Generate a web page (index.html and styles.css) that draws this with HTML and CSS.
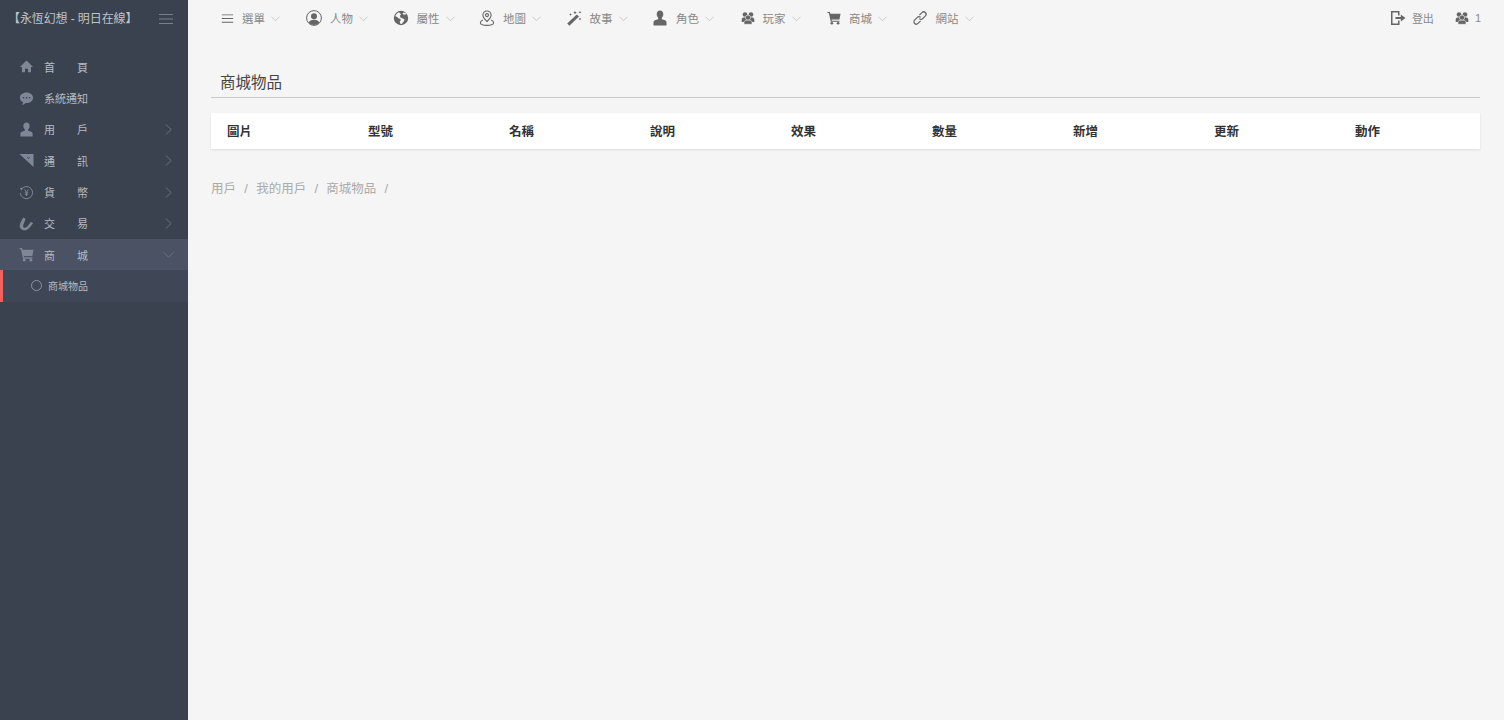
FILE: index.html
```html
<!DOCTYPE html>
<html lang="zh-Hant">

<head>
    <meta charset="UTF-8">
    <title>商城物品</title>
    <link rel="stylesheet" href="styles.css">
</head>

<body>
    <svg class="defs" width="0" height="0">
        <symbol id="i-home" viewBox="0 0 16 16"><path d="M8 1.500 15 8.600h-2.200V14H9.600v-3.600H6.400V14H3.200V8.600H1z"/></symbol>
        <symbol id="i-chat" viewBox="0 0 16 16"><path fill-rule="evenodd" d="M8 1.500c3.900 0 7 2.500 7 5.700s-3.100 5.700-7 5.700l-1-.1C5.900 14 4.600 14.700 3.300 14.800c.6-.8 1-1.600 1-2.700C2.300 11.100 1 9.300 1 7.200 1 4 4.100 1.500 8 1.500zM4.800 6.300a.9.900 0 1 0 0 1.800.9.900 0 0 0 0-1.800zm3.200 0a.9.900 0 1 0 0 1.800.9.900 0 0 0 0-1.800zm3.200 0a.9.900 0 1 0 0 1.800.9.900 0 0 0 0-1.800z"/></symbol>
        <symbol id="i-user" viewBox="0 0 16 16"><path d="M8 .5c2 0 3.300 1.500 3.300 3.700 0 1.500-.6 2.800-1.500 3.500v1.600c2.500.5 4.700 1.300 4.700 2.900V15.500H1.500v-3.300c0-1.600 2.200-2.400 4.700-2.900V7.700c-.9-.7-1.500-2-1.500-3.500C4.700 2 6 .5 8 .5z"/></symbol>
        <symbol id="i-corner" viewBox="0 0 16 16"><path fill-rule="evenodd" d="M.5 1h15v14zM8.400 4.500l1.800 1.700 1.800-1.700-.5-.5-1.300 1.200L8.900 4z"/></symbol>
        <symbol id="i-yen" viewBox="0 0 16 16"><g fill="none" stroke="currentColor" stroke-width="1"><path d="M2.200 5.200A6.500 6.500 0 1 1 1.500 8.500"/><path d="M6 4.800 8 7.800 10 4.800M8 7.800v3.800M6.200 8.300h3.600M6.200 9.900h3.600"/></g><path d="M.8 3.200 3.600 3 3 6z"/></symbol>
        <symbol id="i-magnet" viewBox="0 0 16 16"><path d="M4.500 1.500 1.300 7.800c-1.300 3.400-.2 6 2.400 7 2.900 1 5.600 0 8-2.900l3.300-4.300-2.200-1.600-3.300 4.500c-1.500 1.800-3 2.400-4 2-1.100-.4-1.400-1.500-.9-2.800L7 2.800z"/></symbol>
        <symbol id="i-cart" viewBox="0 0 16 16"><path d="M.5 1h2.800l.5 2H15.500l-1.300 6.700H5.200l.3 1.300h8.800v1.400H4.300L2.100 2.400H.5z"/><circle cx="5.500" cy="14" r="1.500"/><circle cx="12.700" cy="14" r="1.500"/></symbol>
        <symbol id="i-menu" viewBox="0 0 16 16"><path d="M1 3h14v1.100H1zM1 7.500h14v1.100H1zM1 12h14v1.100H1z"/></symbol>
        <symbol id="i-person" viewBox="0 0 16 16"><circle cx="8" cy="8" r="7.400" fill="none" stroke="currentColor" stroke-width="1"/><circle cx="8" cy="6.200" r="3"/><path d="M2.800 12.800c.6-2.200 2.700-3 5.200-3s4.600.8 5.200 3A7 7 0 0 1 8 15a7 7 0 0 1-5.200-2.200z"/></symbol>
        <symbol id="i-globe" viewBox="0 0 16 16"><path fill-rule="evenodd" d="M8 .8a7.200 7.200 0 1 1 0 14.400A7.200 7.200 0 0 1 8 .8zM6 2.200C4 3 2.700 4.600 2.300 6.300l1.900.6 1.400 1.500 1.700.3.500 1.600-1.100 1.400.6 2.100 1.300.1 2.500-2.800.3-1.900-2.200-1-1.700-.8-.7-1.600 1.300-1.200zm4.600.4L9.400 3.700l1.600 1 2.700-.4A6 6 0 0 0 10.600 2.600z"/></symbol>
        <symbol id="i-pin" viewBox="0 0 16 16"><g fill="none" stroke="currentColor" stroke-width="1.100"><path d="M8 11.500C5.600 9.300 3.900 7.500 3.900 5.100a4.100 4.100 0 0 1 8.200 0c0 2.400-1.700 4.200-4.100 6.400z"/><circle cx="8" cy="5.100" r="1.500"/><path d="M3.800 10C2.200 10.800 1.400 11.600 1.400 12.800c0 1.500 3 2.600 6.600 2.600s6.600-1.100 6.600-2.600c0-1.200-.8-2-2.400-2.800"/></g></symbol>
        <symbol id="i-wand" viewBox="0 0 16 16"><path d="M10.800 4.400 13 6.600 3.400 15.800 1.200 13.600z"/><path d="M9 .8l.5 1.300 1.300.7-1.300.5L9 4.600l-.5-1.300-1.300-.5 1.300-.7zM4.500 3l.4 1.100 1.100.4-1.100.4-.4 1.100-.4-1.100L3 4.500l1.100-.4zM14 .8l.4 1 1.100.5-1.100.4-.4 1.100-.4-1.100-1.100-.4 1.100-.5zM14 7.500l.4 1 1.100.5-1.100.4-.4 1.100-.4-1.100-1.100-.4 1.100-.5z"/></symbol>
        <symbol id="i-users" viewBox="0 0 16 16"><circle cx="4.600" cy="4" r="2.700"/><circle cx="11.400" cy="4" r="2.700"/><path d="M.8 12.500V9.500C.8 8 2.600 7.200 4.600 7.200s3.800.8 3.800 2.300v3zM7.600 12.500v-3c0-1.500 1.800-2.300 3.800-2.300s3.800.8 3.800 2.300v3z"/><g stroke="#f5f5f5" stroke-width=".7"><circle cx="8" cy="7.600" r="3"/><path d="M3.400 15.200v-2.500c0-1.500 2.200-2.200 4.600-2.200s4.600.7 4.600 2.200v2.500z"/></g></symbol>
        <symbol id="i-link" viewBox="0 0 16 16"><g fill="none" stroke="currentColor" stroke-width="1.200"><path d="M7.400 5.200 10 2.600a2.300 2.300 0 0 1 3.400 3.300l-2.700 2.700a2.300 2.300 0 0 1-3.300 0"/><path d="M8.600 10.800 6 13.400a2.300 2.300 0 0 1-3.400-3.300l2.700-2.700a2.300 2.300 0 0 1 3.300 0"/></g></symbol>
        <symbol id="i-logout" viewBox="0 0 16 16"><path d="M1 1h8.500v4.500H8V2.500H2.500v11H8v-3h1.500v4.500H1z"/><path d="M5.500 7h5.300V4.500L15.500 8l-4.700 3.500V9H5.500z"/></symbol>
        <symbol id="i-right" viewBox="0 0 10 10"><path d="M2.500.5 7.500 5l-5 4.500" fill="none" stroke="currentColor" stroke-width=".8"/></symbol>
        <symbol id="i-down" viewBox="0 0 10 10"><path d="M.5 3 5 7.500 9.500 3" fill="none" stroke="currentColor" stroke-width=".8"/></symbol>
    </svg>

    <aside class="sidebar">
        <div class="brand">
            <span class="brand-name">【永恆幻想 - 明日在線】</span>
            <svg class="brand-toggle"><use href="#i-menu"/></svg>
        </div>
        <ul class="side-menu">
            <li class="side-item"><svg class="side-icon"><use href="#i-home"/></svg><span>首　　頁</span></li>
            <li class="side-item"><svg class="side-icon"><use href="#i-chat"/></svg><span>系統通知</span></li>
            <li class="side-item"><svg class="side-icon"><use href="#i-user"/></svg><span>用　　戶</span><svg class="side-arrow"><use href="#i-right"/></svg></li>
            <li class="side-item"><svg class="side-icon"><use href="#i-corner"/></svg><span>通　　訊</span><svg class="side-arrow"><use href="#i-right"/></svg></li>
            <li class="side-item"><svg class="side-icon"><use href="#i-yen"/></svg><span>貨　　幣</span><svg class="side-arrow"><use href="#i-right"/></svg></li>
            <li class="side-item"><svg class="side-icon"><use href="#i-magnet"/></svg><span>交　　易</span><svg class="side-arrow"><use href="#i-right"/></svg></li>
            <li class="side-item active"><svg class="side-icon"><use href="#i-cart"/></svg><span>商　　城</span><svg class="side-arrow"><use href="#i-down"/></svg></li>
            <li class="side-sub"><span class="sub-dot"></span><span>商城物品</span></li>
        </ul>
    </aside>

    <div class="main">
        <header class="topbar">
            <nav class="topnav">
                <a class="nav-item"><svg class="nav-icon small"><use href="#i-menu"/></svg><span>選單</span><svg class="nav-arrow"><use href="#i-down"/></svg></a>
                <a class="nav-item"><svg class="nav-icon"><use href="#i-person"/></svg><span>人物</span><svg class="nav-arrow"><use href="#i-down"/></svg></a>
                <a class="nav-item"><svg class="nav-icon"><use href="#i-globe"/></svg><span>屬性</span><svg class="nav-arrow"><use href="#i-down"/></svg></a>
                <a class="nav-item"><svg class="nav-icon"><use href="#i-pin"/></svg><span>地圖</span><svg class="nav-arrow"><use href="#i-down"/></svg></a>
                <a class="nav-item"><svg class="nav-icon"><use href="#i-wand"/></svg><span>故事</span><svg class="nav-arrow"><use href="#i-down"/></svg></a>
                <a class="nav-item"><svg class="nav-icon"><use href="#i-user"/></svg><span>角色</span><svg class="nav-arrow"><use href="#i-down"/></svg></a>
                <a class="nav-item"><svg class="nav-icon narrow"><use href="#i-users"/></svg><span>玩家</span><svg class="nav-arrow"><use href="#i-down"/></svg></a>
                <a class="nav-item"><svg class="nav-icon narrow"><use href="#i-cart"/></svg><span>商城</span><svg class="nav-arrow"><use href="#i-down"/></svg></a>
                <a class="nav-item"><svg class="nav-icon"><use href="#i-link"/></svg><span>網站</span><svg class="nav-arrow"><use href="#i-down"/></svg></a>
            </nav>
            <div class="topright">
                <a class="top-link"><svg class="nav-icon"><use href="#i-logout"/></svg><span>登出</span></a>
                <a class="top-link"><svg class="nav-icon narrow"><use href="#i-users"/></svg><span>1</span></a>
            </div>
        </header>

        <section class="content">
            <h2 class="page-title">商城物品</h2>
            <div class="table-head">
                <div>圖片</div>
                <div>型號</div>
                <div>名稱</div>
                <div>說明</div>
                <div>效果</div>
                <div>數量</div>
                <div>新增</div>
                <div>更新</div>
                <div>動作</div>
            </div>
            <div class="crumbs">
                <span>用戶</span><i>/</i><span>我的用戶</span><i>/</i><span>商城物品</span><i>/</i>
            </div>
        </section>
    </div>
</body>

</html>
```

FILE: styles.css
```css
* {
    box-sizing: border-box;
}

html, body {
    height: 100%;
}

body {
    margin: 0;
    display: flex;
    height: 720px;
    overflow: hidden;
    background-color: #f5f5f5;
    font-family: "Liberation Sans", "Noto Sans CJK TC", sans-serif;
    color: #777;
}

.defs {
    position: absolute;
}

svg {
    fill: currentColor;
    flex: none;
}

.sidebar {
    width: 188px;
    flex: none;
    background-color: #3a4250;
}

.brand {
    height: 51px;
    padding: 10px 14px 0 8px;
    display: flex;
    justify-content: space-between;
    align-items: flex-start;
}

.brand-name {
    font-size: 12px;
    letter-spacing: -0.1px;
    line-height: 18px;
    color: #bfc3ca;
    white-space: nowrap;
}

.brand-toggle {
    width: 16px;
    height: 16px;
    margin-top: 1px;
    color: #79808c;
}

.side-menu {
    list-style: none;
    margin: 0;
    padding: 0;
}

.side-item {
    height: 31.350px;
    padding: 0 14px 0 19px;
    display: flex;
    align-items: center;
    font-size: 11px;
    color: #b6bbc3;
}

.side-item span {
    flex: 1;
}

.side-item.active {
    background-color: #4a5264;
}

.side-icon {
    width: 15px;
    height: 15px;
    margin-right: 10px;
    color: #7f8796;
}

.side-arrow {
    width: 11px;
    height: 11px;
    color: #6e7683;
}

.side-sub {
    height: 31.700px;
    padding: 0 0 1px 28px;
    display: flex;
    align-items: center;
    font-size: 10px;
    color: #b6bbc3;
    background-color: #3f4757;
    border-left: 3px solid #f0615a;
}

.sub-dot {
    width: 11px;
    height: 11px;
    margin-right: 6px;
    border: 1.500px solid #8d939f;
    border-radius: 50%;
}

.main {
    flex: 1;
    min-width: 0;
}

.topbar {
    height: 36px;
    padding: 0 23px 0 33px;
    display: flex;
    justify-content: space-between;
    align-items: center;
    font-size: 11.500px;
}

.topnav {
    display: flex;
}

.nav-item {
    width: 86.500px;
    display: flex;
    align-items: center;
}

.nav-item:first-child {
    width: 85px;
}

.nav-item span {
    color: #888;
    margin-right: 6px;
}

.nav-icon {
    width: 16px;
    height: 16px;
    margin-right: 8px;
    color: #666;
}

.nav-icon.small {
    width: 13px;
    height: 13px;
    margin-right: 8px;
}

.nav-icon.narrow {
    width: 14px;
    height: 14px;
    margin-left: 2px;
}

.nav-arrow {
    width: 9px;
    height: 9px;
    color: #bbb;
}

.topright {
    display: flex;
    gap: 19px;
    font-size: 11px;
    color: #888;
}

.top-link {
    display: flex;
    align-items: center;
}

.top-link .nav-icon {
    margin-right: 6px;
}

.content {
    padding: 0 24px 0 23px;
}

.page-title {
    margin: 0;
    height: 62px;
    padding: 37px 0 0 9px;
    border-bottom: 1px solid #c9c9c9;
    font-size: 15.500px;
    line-height: 20px;
    font-weight: 400;
    color: #444;
}

.table-head {
    margin-top: 15px;
    height: 36px;
    padding-bottom: 1px;
    display: grid;
    grid-template-columns: repeat(9, 141px);
    align-items: center;
    background-color: #fff;
    box-shadow: 0 1px 2px rgba(60, 80, 110, 0.15);
    font-size: 12.500px;
    font-weight: 700;
    color: #333;
}

.table-head div {
    padding-left: 16px;
}

.crumbs {
    margin-top: 31px;
    display: flex;
    font-size: 12.500px;
    line-height: 18px;
    color: #aaa;
}

.crumbs i {
    margin: 0 8.250px;
    font-style: normal;
    font-size: 13px;
}
```
